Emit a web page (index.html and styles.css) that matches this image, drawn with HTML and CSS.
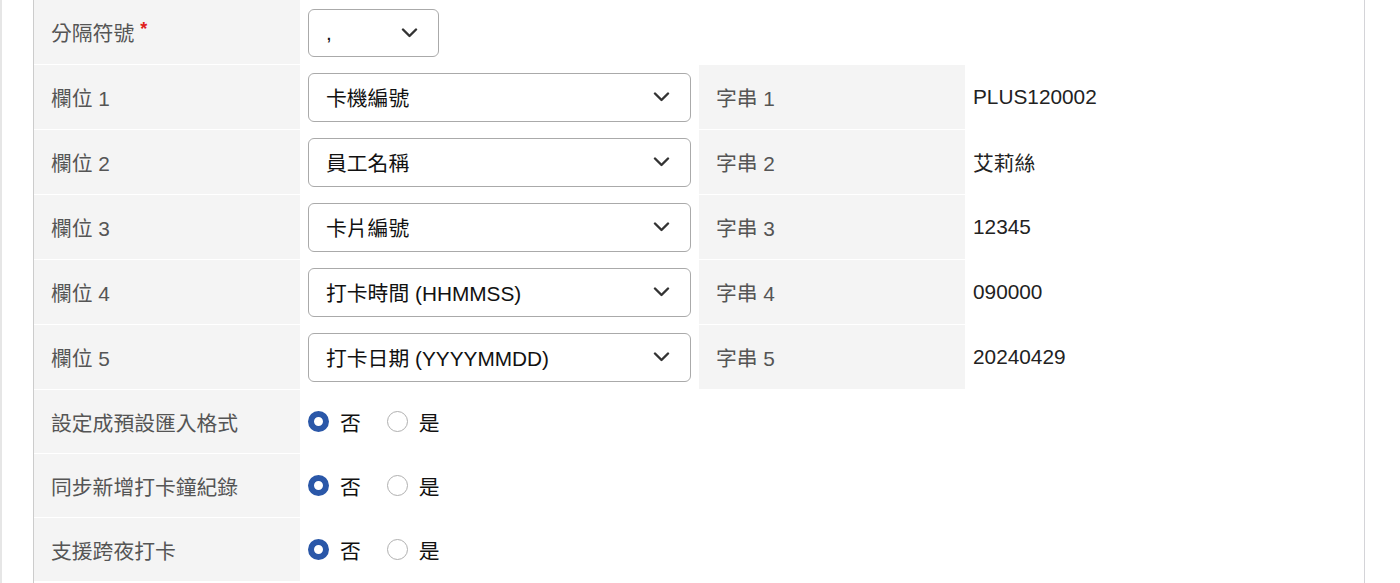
FILE: index.html
```html
<!DOCTYPE html>
<html lang="zh-Hant">
<head>
<meta charset="utf-8">
<link rel="stylesheet" href="styles.css">
</head>
<body>
<div class="page">
  <div class="form">
    <div class="row first">
      <div class="label">分隔符號<span class="req">*</span></div>
      <div class="field">
        <div class="select small"><span>,</span><svg class="chev" viewBox="0 0 16 10"><path d="M1.5 1.5 L8 8 L14.5 1.5" /></svg></div>
      </div>
      <div class="blank"></div>
    </div>

    <div class="row">
      <div class="label">欄位 1</div>
      <div class="field"><div class="select"><span>卡機編號</span><svg class="chev" viewBox="0 0 16 10"><path d="M1.5 1.5 L8 8 L14.5 1.5" /></svg></div></div>
      <div class="label">字串 1</div>
      <div class="value">PLUS120002</div>
    </div>

    <div class="row">
      <div class="label">欄位 2</div>
      <div class="field"><div class="select"><span>員工名稱</span><svg class="chev" viewBox="0 0 16 10"><path d="M1.5 1.5 L8 8 L14.5 1.5" /></svg></div></div>
      <div class="label">字串 2</div>
      <div class="value">艾莉絲</div>
    </div>

    <div class="row">
      <div class="label">欄位 3</div>
      <div class="field"><div class="select"><span>卡片編號</span><svg class="chev" viewBox="0 0 16 10"><path d="M1.5 1.5 L8 8 L14.5 1.5" /></svg></div></div>
      <div class="label">字串 3</div>
      <div class="value">12345</div>
    </div>

    <div class="row">
      <div class="label">欄位 4</div>
      <div class="field"><div class="select"><span>打卡時間 (HHMMSS)</span><svg class="chev" viewBox="0 0 16 10"><path d="M1.5 1.5 L8 8 L14.5 1.5" /></svg></div></div>
      <div class="label">字串 4</div>
      <div class="value">090000</div>
    </div>

    <div class="row">
      <div class="label">欄位 5</div>
      <div class="field"><div class="select"><span>打卡日期 (YYYYMMDD)</span><svg class="chev" viewBox="0 0 16 10"><path d="M1.5 1.5 L8 8 L14.5 1.5" /></svg></div></div>
      <div class="label">字串 5</div>
      <div class="value">20240429</div>
    </div>

    <div class="row short">
      <div class="label">設定成預設匯入格式</div>
      <div class="field radios">
        <span class="radio on"></span><span class="rtext">否</span>
        <span class="radio"></span><span class="rtext">是</span>
      </div>
      <div class="blank"></div>
    </div>

    <div class="row short">
      <div class="label">同步新增打卡鐘紀錄</div>
      <div class="field radios">
        <span class="radio on"></span><span class="rtext">否</span>
        <span class="radio"></span><span class="rtext">是</span>
      </div>
      <div class="blank"></div>
    </div>

    <div class="row short">
      <div class="label">支援跨夜打卡</div>
      <div class="field radios">
        <span class="radio on"></span><span class="rtext">否</span>
        <span class="radio"></span><span class="rtext">是</span>
      </div>
      <div class="blank"></div>
    </div>
  </div>
</div>
</body>
</html>
```

FILE: styles.css
```css
html, body {
  margin: 0;
  padding: 0;
  background: #ffffff;
}

body {
  font-family: "Liberation Sans", "Noto Sans CJK TC", Arial, sans-serif;
  font-size: 20.8px;
}

.page {
  border-left: 2px solid #e6e6e6;
  padding-left: 31px;
  width: 1332px;
  height: 583px;
  overflow: hidden;
}

.form {
  width: 1330px;
  border-left: 1px solid #cccccc;
  border-right: 1px solid #d4d4d8;
  display: flex;
  flex-direction: column;
  gap: 1px;
  background: #ffffff;
  min-height: 600px;
}

.row {
  display: grid;
  grid-template-columns: 266px 399px 266px 399px;
  height: 64px;
}

.row.first .field {
  padding-top: 1px;
}

.row.short {
  height: 63px;
}

.label {
  background: #f4f4f4;
  color: #555555;
  display: flex;
  align-items: center;
  padding-left: 17px;
  white-space: nowrap;
}

.req {
  color: #e0201c;
  font-size: 18px;
  font-weight: bold;
  margin-left: 6px;
  position: relative;
  top: -3px;
}

.field {
  display: flex;
  align-items: center;
  padding: 0 8px;
}

.value {
  display: flex;
  align-items: center;
  padding-left: 8px;
  color: #222222;
}

.blank {
  grid-column: span 2;
}

.select {
  box-sizing: border-box;
  width: 383px;
  height: 49px;
  border: 1px solid #aaaaaa;
  border-radius: 6px;
  background: #ffffff;
  display: flex;
  align-items: center;
  justify-content: space-between;
  padding: 0 20px 0 17px;
  color: #111111;
}

.select.small {
  width: 131px;
  height: 48px;
}

.chev {
  width: 17px;
  height: 10px;
  flex: none;
}

.chev path {
  fill: none;
  stroke: #333333;
  stroke-width: 2.4;
  stroke-linecap: round;
  stroke-linejoin: round;
}

.radios {
  gap: 0;
}

.radio {
  box-sizing: border-box;
  width: 21px;
  height: 21px;
  border-radius: 50%;
  border: 1px solid #b0b0b0;
  background: #ffffff;
  flex: none;
}

.radio.on {
  border: 6.5px solid #2a57a8;
}

.rtext {
  color: #111111;
  margin-left: 11px;
  margin-right: 26px;
}
```
